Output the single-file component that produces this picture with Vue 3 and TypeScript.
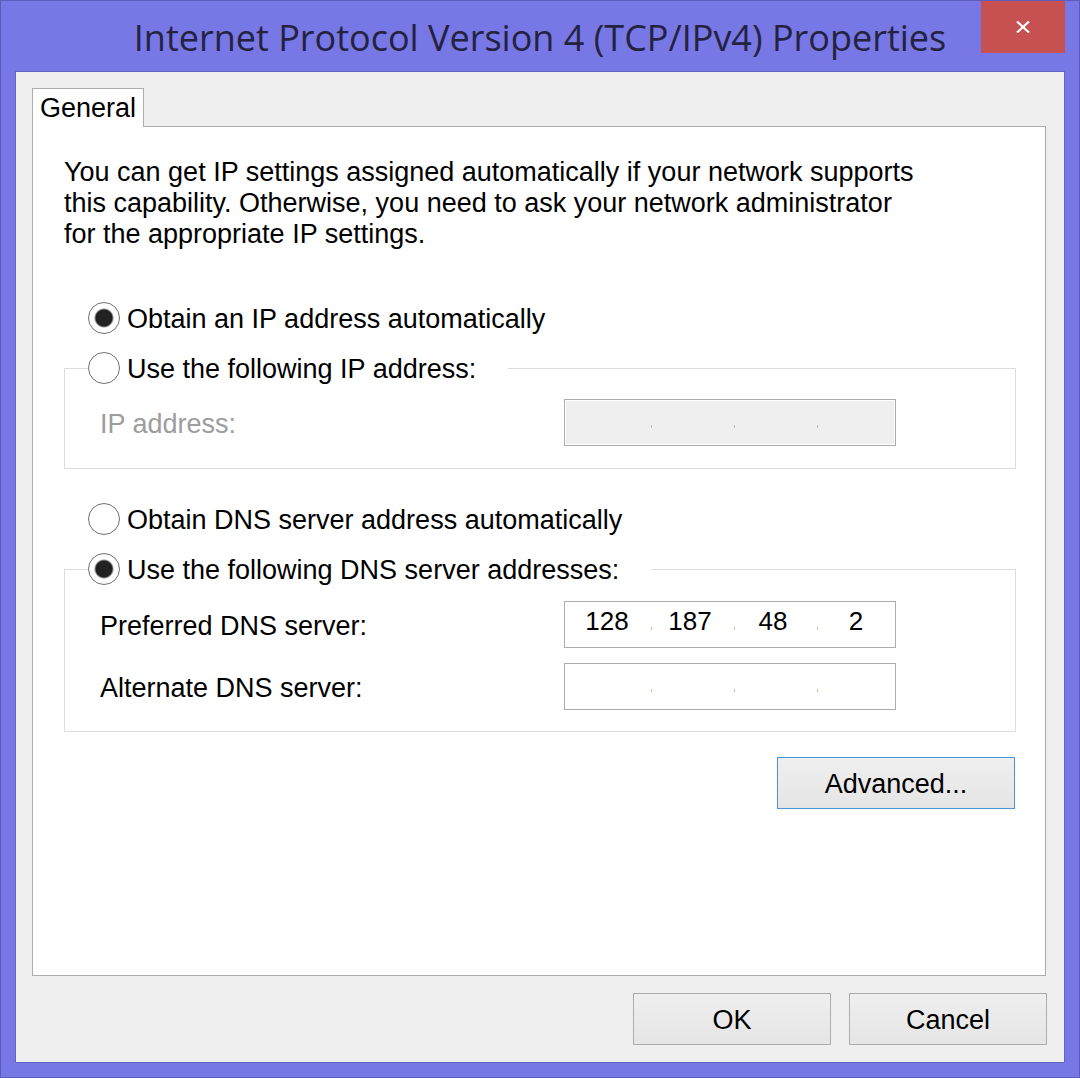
<script setup lang="ts">
import { ref } from 'vue'

interface AddressRow {
  id: string
  label: string
  octets: string[]
}

const ipMode = ref<'auto' | 'manual'>('auto')
const dnsMode = ref<'auto' | 'manual'>('manual')

const ipRows = ref<AddressRow[]>([
  { id: 'ip', label: 'IP address:', octets: ['', '', '', ''] },
])
const dnsRows = ref<AddressRow[]>([
  { id: 'dns-preferred', label: 'Preferred DNS server:', octets: ['128', '187', '48', '2'] },
  { id: 'dns-alternate', label: 'Alternate DNS server:', octets: ['', '', '', ''] },
])
</script>

<template>
  <div class="window">
    <header class="titlebar">
      <h1 class="title">Internet Protocol Version 4 (TCP/IPv4) Properties</h1>
      <button class="close" type="button" aria-label="Close">
        <svg width="14" height="12" viewBox="0 0 14 12" aria-hidden="true">
          <path d="M1 0.5 L13 11.5 M13 0.5 L1 11.5" stroke="#fff" stroke-width="2.2" fill="none" />
        </svg>
      </button>
    </header>

    <main class="body">
      <div class="tabs" role="tablist">
        <button class="tab" type="button" role="tab" aria-selected="true">General</button>
      </div>

      <section class="panel" role="tabpanel">
        <p class="intro">
          You can get IP settings assigned automatically if your network supports
          this capability. Otherwise, you need to ask your network administrator
          for the appropriate IP settings.
        </p>

        <label class="radio">
          <input v-model="ipMode" type="radio" name="ip-mode" value="auto" />
          <span>Obtain an IP address automatically</span>
        </label>
        <fieldset class="group">
          <legend>
            <label class="radio">
              <input v-model="ipMode" type="radio" name="ip-mode" value="manual" />
              <span>Use the following IP address:</span>
            </label>
          </legend>
          <div
            v-for="row in ipRows"
            :key="row.id"
            class="row"
            :class="{ disabled: ipMode === 'auto' }"
          >
            <label :for="row.id + '-0'">{{ row.label }}</label>
            <div class="address">
              <template v-for="(_, i) in row.octets" :key="i">
                <span v-if="i > 0" class="dot"></span>
                <input
                  :id="row.id + '-' + i"
                  v-model="row.octets[i]"
                  type="text"
                  maxlength="3"
                  :disabled="ipMode === 'auto'"
                  :aria-label="i > 0 ? row.label + ' part ' + (i + 1) : undefined"
                />
              </template>
            </div>
          </div>
        </fieldset>

        <label class="radio second">
          <input v-model="dnsMode" type="radio" name="dns-mode" value="auto" />
          <span>Obtain DNS server address automatically</span>
        </label>
        <fieldset class="group dns">
          <legend>
            <label class="radio">
              <input v-model="dnsMode" type="radio" name="dns-mode" value="manual" />
              <span>Use the following DNS server addresses:</span>
            </label>
          </legend>
          <div
            v-for="row in dnsRows"
            :key="row.id"
            class="row"
            :class="{ disabled: dnsMode === 'auto' }"
          >
            <label :for="row.id + '-0'">{{ row.label }}</label>
            <div class="address">
              <template v-for="(_, i) in row.octets" :key="i">
                <span v-if="i > 0" class="dot"></span>
                <input
                  :id="row.id + '-' + i"
                  v-model="row.octets[i]"
                  type="text"
                  maxlength="3"
                  :disabled="dnsMode === 'auto'"
                  :aria-label="i > 0 ? row.label + ' part ' + (i + 1) : undefined"
                />
              </template>
            </div>
          </div>
        </fieldset>

        <button class="button advanced" type="button">Advanced...</button>
      </section>

      <footer class="actions">
        <button class="button" type="button">OK</button>
        <button class="button" type="button">Cancel</button>
      </footer>
    </main>
  </div>
</template>

<style>
body {
  margin: 0;
}
</style>

<style scoped>
.window,
.window * {
  box-sizing: border-box;
}
.window {
  display: flex;
  flex-direction: column;
  min-height: 100vh;
  padding: 0 14px 14px;
  border: 1px solid #5c5cbc;
  background: #7777e6;
  color: #000;
  font-family: "Liberation Sans", Arial, sans-serif;
  font-size: 27px;
  line-height: 31px;
}
.window button,
.window input {
  font: inherit;
  color: inherit;
}
.titlebar {
  display: grid;
  grid-template-columns: 84px 1fr 84px;
  height: 70px;
}
.title {
  grid-column: 2;
  display: flex;
  justify-content: center;
  margin: 0;
  color: #23233f;
  font-family: "Open Sans", "Noto Sans", sans-serif;
  font-size: 36px;
  font-weight: 400;
  line-height: 74px;
  white-space: nowrap;
}
.close {
  display: flex;
  align-items: center;
  justify-content: center;
  height: 52px;
  padding: 0;
  border: 0;
  background: #c75050;
}
.body {
  flex: 1;
  display: flex;
  flex-direction: column;
  padding: 16px 17px 17px 16px;
  border: 1px solid #6363c6;
  background: #efefef;
}
.tabs {
  display: flex;
}
.tab {
  position: relative;
  width: 112px;
  height: 39px;
  margin-bottom: -1px;
  padding: 0;
  border: 1px solid #acacac;
  border-bottom: 0;
  background: #fff;
}
.panel {
  flex: 1;
  display: flex;
  flex-direction: column;
  margin-right: 1px;
  padding: 30px 29px 30px 31px;
  border: 1px solid #acacac;
  background: #fff;
}
.intro {
  max-width: 860px;
  margin: 0 0 52px;
}
.radio {
  display: flex;
  align-items: center;
  gap: 7px;
  height: 32px;
}
.panel > .radio {
  padding-left: 24px;
}
.panel > .second {
  margin-top: 34px;
}
.radio input {
  appearance: none;
  flex: none;
  width: 32px;
  height: 32px;
  margin: 0;
  border: 1px solid #707070;
  border-radius: 50%;
  background: #fff;
}
.radio input:checked {
  background: radial-gradient(circle, #222 0 8px, #fff 10px);
}
.radio span {
  padding-top: 2px;
}
.group {
  min-width: 0;
  margin: 18px 0 0;
  padding: 15px 35px 22px;
  border: 1px solid #dcdcdc;
}
.dns {
  padding: 16px 35px 21px;
}
.group legend {
  margin-left: -12px;
  padding: 0 32px 0 0;
}
.row {
  display: grid;
  grid-template-columns: minmax(0, 464px) 332px;
  align-items: center;
}
.row + .row {
  margin-top: 15px;
}
.row > label {
  padding-top: 3px;
}
.address {
  display: flex;
  height: 47px;
  padding: 0 1px 0 4px;
  border: 1px solid #acacac;
  background: #fff;
}
.address input {
  flex: 1;
  width: 0;
  height: 39px;
  padding: 0;
  border: 0;
  background: none;
  font-size: 26px;
  text-align: center;
}
.dot {
  width: 1px;
  height: 3px;
  margin: 25px 0 0 6px;
  background: #e8b88c;
}
.disabled label {
  color: #9d9d9d;
}
.disabled .address {
  background: #efefef;
  box-shadow: inset 0 0 0 1px #fff;
}
.disabled .dot {
  background: #c0c0c0;
}
.button {
  width: 198px;
  height: 52px;
  padding: 2px 0 0;
  border: 1px solid #acacac;
  background: linear-gradient(#efefef, #e5e5e5);
}
.advanced {
  align-self: flex-end;
  width: 238px;
  margin: 25px 1px 0 0;
  border-color: #4a94d8;
}
.actions {
  display: flex;
  justify-content: flex-end;
  gap: 18px;
  margin-top: 17px;
}
</style>
